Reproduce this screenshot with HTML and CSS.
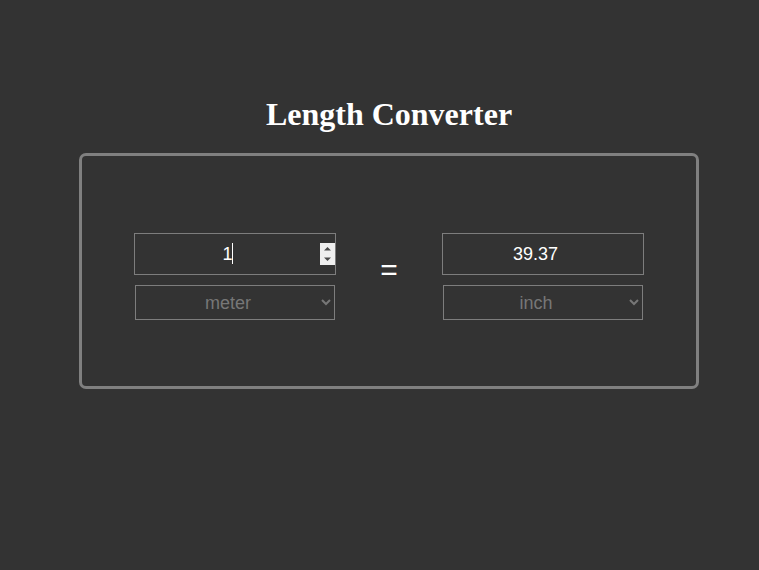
FILE: index.html
```html
<!DOCTYPE html>
<html lang="en">
<head>
<meta charset="utf-8">
<title>Length Converter</title>
<link rel="stylesheet" href="styles.css">
</head>
<body>
<main class="page">
  <h1 class="title">Length Converter</h1>
  <section class="card">
    <div class="row">
      <div class="col">
        <div class="field">
          <input class="field-input" type="text" value="1" aria-label="Value">
          <span class="caret"></span>
          <span class="spin" aria-hidden="true">
            <svg width="15" height="22" viewBox="0 0 15 22">
              <rect width="15" height="22" fill="#efefef"/>
              <path d="M4 7.5 L7.5 4 L11 7.5 Z" fill="#4a4a4a"/>
              <path d="M4 14.5 L7.5 18 L11 14.5 Z" fill="#4a4a4a"/>
            </svg>
          </span>
        </div>
        <select class="unit" aria-label="From unit">
          <option selected>meter</option>
          <option>centimeter</option>
          <option>inch</option>
          <option>foot</option>
        </select>
      </div>
      <div class="equals">=</div>
      <div class="col">
        <div class="field">
          <input class="field-input" type="text" value="39.37" readonly aria-label="Result">
        </div>
        <select class="unit" aria-label="To unit">
          <option>meter</option>
          <option>centimeter</option>
          <option selected>inch</option>
          <option>foot</option>
        </select>
      </div>
    </div>
  </section>
</main>
</body>
</html>
```
FILE: styles.css
```css
html, body {
  margin: 0;
  padding: 0;
  background: #333333;
}

body {
  font-family: "Liberation Sans", Arial, sans-serif;
  width: 759px;
  height: 570px;
  overflow: hidden;
}

.page {
  width: 620px;
  margin-left: 79px;
  padding-top: 96px;
}

.title {
  margin: 0 0 20px;
  text-align: center;
  font-family: "Liberation Serif", "Times New Roman", serif;
  font-weight: bold;
  font-size: 32px;
  line-height: 37px;
  color: #ffffff;
}

.card {
  box-sizing: border-box;
  width: 620px;
  height: 236px;
  border: 3px solid #808080;
  border-radius: 7px;
  padding-top: 77px;
}

.row {
  display: flex;
  justify-content: center;
  align-items: flex-start;
}

.col {
  width: 202px;
  display: flex;
  flex-direction: column;
  align-items: center;
  gap: 10px;
}

.field {
  position: relative;
  box-sizing: border-box;
  width: 202px;
  height: 42px;
  border: 1px solid #7d7d7d;
}

.field-input {
  box-sizing: border-box;
  width: 100%;
  height: 100%;
  margin: 0;
  padding: 0 17px 0 2px;
  border: 0;
  outline: none;
  background: transparent;
  color: #ffffff;
  font-family: "Liberation Sans", Arial, sans-serif;
  font-size: 18px;
  text-align: center;
}

.caret {
  position: absolute;
  left: 97px;
  top: 9px;
  width: 1px;
  height: 21px;
  background: #ffffff;
}

.spin {
  position: absolute;
  right: 0;
  top: 9px;
  width: 15px;
  height: 22px;
  display: block;
}

.spin svg {
  display: block;
}

.unit {
  box-sizing: border-box;
  width: 200px;
  height: 35px;
  margin: 0;
  padding: 0 2px 0 0;
  border: 1px solid #7d7d7d;
  border-radius: 0;
  background-color: #333333;
  color: #777777;
  font-family: "Liberation Sans", Arial, sans-serif;
  font-size: 18px;
  text-align: center;
  text-align-last: center;
}

.equals {
  width: 106px;
  text-align: center;
  color: #ffffff;
  font-family: "Liberation Sans", Arial, sans-serif;
  font-size: 30px;
  line-height: 30px;
  padding-top: 22px;
}
```
